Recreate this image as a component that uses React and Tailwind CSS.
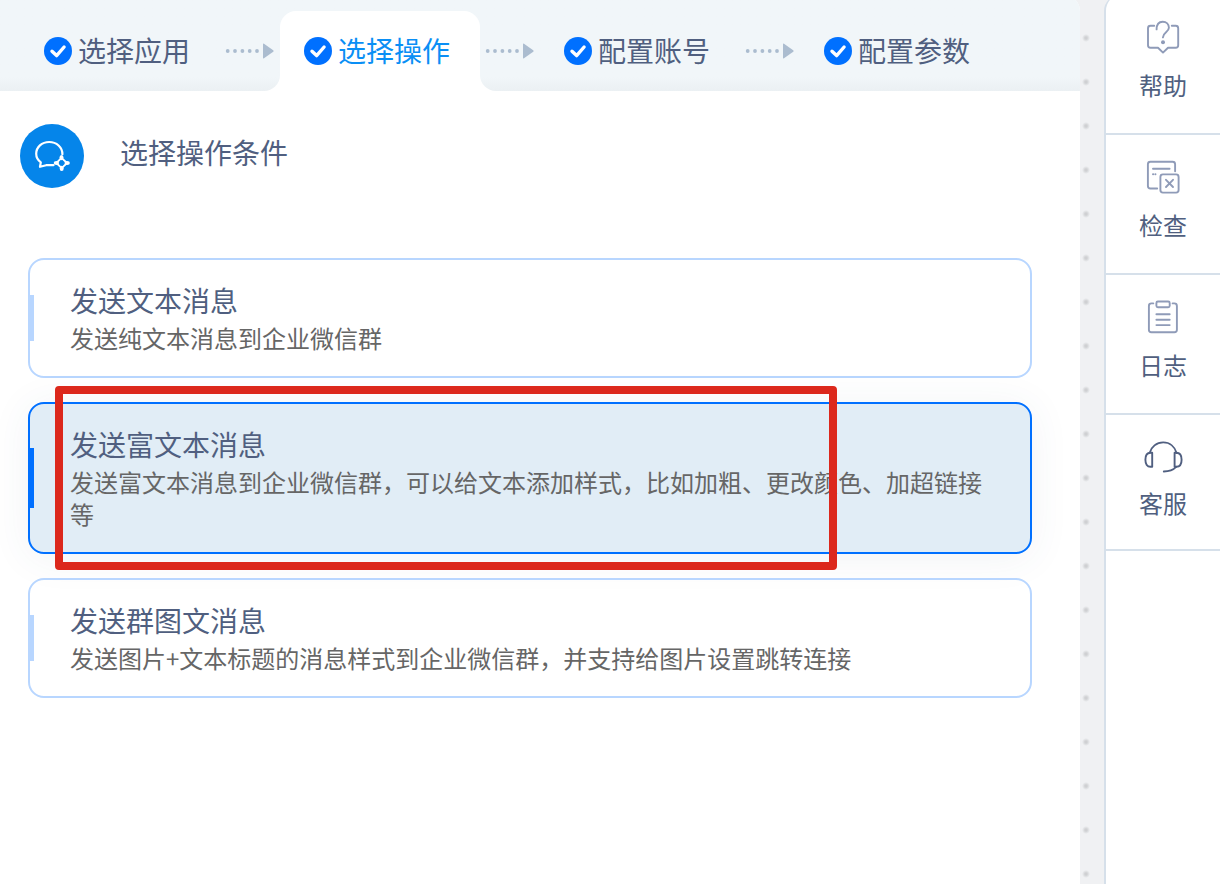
import { useState } from 'react'
import clsx from 'clsx'

const steps = ['选择应用', '选择操作', '配置账号', '配置参数']

const actions = [
  { id: 'text', title: '发送文本消息', desc: '发送纯文本消息到企业微信群' },
  {
    id: 'rich',
    title: '发送富文本消息',
    desc: '发送富文本消息到企业微信群，可以给文本添加样式，比如加粗、更改颜色、加超链接等',
    marked: true
  },
  { id: 'news', title: '发送群图文消息', desc: '发送图片+文本标题的消息样式到企业微信群，并支持给图片设置跳转连接' }
]

function CheckBadge() {
  return (
    <svg viewBox="0 0 28 28" className="w-7 h-7 shrink-0" aria-hidden="true">
      <circle cx="14" cy="14" r="14" fill="#0070ff" />
      <path d="M8 14.2l4.6 4.4 7.5-8.6" fill="none" stroke="#fff" strokeWidth="3.4" strokeLinecap="round" strokeLinejoin="round" />
    </svg>
  )
}

function StepArrow() {
  return (
    <svg viewBox="0 0 60 20" className="w-15 h-5 shrink-0" fill="#abbccf" aria-hidden="true">
      {[7.7, 15, 22.4, 29.7, 37].map(x => (
        <circle key={x} cx={x} cy="10" r="1.9" />
      ))}
      <path d="M43 3.2q0-1 1-.5l9.2 6.5q1 .8 0 1.6l-9.2 6.5q-1 .5-1-.5z" />
    </svg>
  )
}

function ChatLogo() {
  return (
    <svg viewBox="0 0 64 64" className="w-16 h-16 shrink-0" aria-hidden="true">
      <circle cx="32" cy="32" r="32" fill="#0585ea" />
      <g fill="none" stroke="#fff" strokeWidth="2.2" strokeLinecap="round" strokeLinejoin="round">
        <path d="M33.5 41.2H26.2L20 42.8L20.8 38.4C17.8 36.2 16.2 33.2 16.2 29.8C16.2 23.2 21.8 18 29.2 18S42.4 23.2 42.4 30.2" />
        <path d="M41.5 33.8L47 39L41.7 44.2L36.4 39z" strokeWidth="1.8" />
      </g>
      <g fill="#fff">
        <ellipse cx="41.5" cy="33.6" rx="2" ry="2.6" />
        <ellipse cx="47.2" cy="39" rx="2.7" ry="1.9" />
        <ellipse cx="41.7" cy="44.4" rx="2" ry="2.6" />
        <ellipse cx="36.4" cy="39" rx="2.7" ry="1.9" />
      </g>
    </svg>
  )
}

function SideIcon({ children, className }) {
  return (
    <svg
      viewBox="0 0 44 44"
      className={clsx('w-11 h-11', className)}
      fill="none"
      stroke="currentColor"
      strokeWidth="1.9"
      strokeLinecap="round"
      strokeLinejoin="round"
      aria-hidden="true"
    >
      {children}
    </svg>
  )
}

const sideItems = [
  {
    label: '帮助',
    icon: (
      <SideIcon className="text-[#8f9bb8]">
        <path d="M13.2 10.8H9.5Q7 10.8 7 13.3V30.2Q7 32.7 9.5 32.7H17L22 37.6L27 32.7H34.7Q37.2 32.7 37.2 30.2V13.3Q37.2 10.8 34.7 10.8H30.8" />
        <path d="M15.6 14.4C15.6 9.6 18 6.7 21.7 6.7S27.9 9.4 27.9 12.8C27.9 17.2 21.9 17.4 21.9 22.4" />
        <circle cx="22" cy="27.3" r="2" fill="currentColor" stroke="none" />
      </SideIcon>
    )
  },
  {
    label: '检查',
    icon: (
      <SideIcon className="text-[#8f9bb8]">
        <path d="M16.2 33.5H9.4Q6.9 33.5 6.9 31V9.2Q6.9 6.7 9.4 6.7H31.6Q34.1 6.7 34.1 9.2V16.3" />
        <path d="M12 13.7H28.6M12 19.3H12.2M14.3 19.3H14.5" />
        <rect x="19.4" y="19.4" width="18.2" height="18.2" rx="2.5" />
        <path d="M25 24.8L32 32M32 24.8L25 32" />
      </SideIcon>
    )
  },
  {
    label: '日志',
    icon: (
      <SideIcon className="text-[#8f9bb8]">
        <path d="M12.3 8.4H10.4Q7.9 8.4 7.9 10.9V34.8Q7.9 37.3 10.4 37.3H33.4Q35.9 37.3 35.9 34.8V10.9Q35.9 8.4 33.4 8.4H31.6" />
        <rect x="15.4" y="6.5" width="13.3" height="5.8" rx="1.5" />
        <path d="M15.4 19.3H28.7M15.4 24.7H28.7M15.4 30.1H28.7" />
      </SideIcon>
    )
  },
  {
    label: '客服',
    compact: true,
    icon: (
      <SideIcon className="text-[#505f80]">
        <path d="M8.6 18C10.2 11.8 15.6 7.4 22.2 7.4S33.8 11.8 35.6 18" />
        <path d="M11.2 17.8V31.8H9.4C6.2 31.8 4.4 29 4.4 24.8S6.2 17.8 9.4 17.8z" />
        <path d="M33.6 17.8V31.8H35.4C38.8 31.8 40.6 29 40.6 24.8S38.8 17.8 35.4 17.8z" />
        <path d="M35.2 31.8C32 35 28 36.4 22.8 36.5" />
      </SideIcon>
    )
  }
]

export default function App() {
  const [step, setStep] = useState(1)
  const [selected, setSelected] = useState('rich')

  const renderStep = i => (
    <button
      key={steps[i]}
      onClick={() => setStep(i)}
      className={clsx(
        'flex items-center gap-1.5 w-50 h-20 pl-6 shrink-0 whitespace-nowrap text-[28px]',
        i === step ? 'rounded-t-2xl bg-white text-[#0a8ff5]' : 'text-[#505f80]'
      )}
    >
      <CheckBadge />
      <span className="pb-0.5">{steps[i]}</span>
    </button>
  )

  const barClass = 'flex items-center pt-4 bg-linear-to-b from-[#f1f6f9] from-85% to-[#ebf0f3]'

  return (
    <div lang="zh-CN" className="min-h-screen overflow-hidden bg-[#f0f1f3] font-['Noto_Sans_CJK_SC',sans-serif]">
      <div className="flex items-stretch min-h-[calc(100vh+5px)] -mt-[5px]">
        <main className="flex-1 min-w-0 bg-white rounded-tr-2xl overflow-hidden">
          {/* Steps */}
          <nav className="flex">
            <div className={clsx(barClass, 'pl-5 rounded-br-2xl')}>
              {steps.slice(0, step).map((name, i) => (
                <div key={name} className="flex items-center">
                  {renderStep(i)}
                  <StepArrow />
                </div>
              ))}
            </div>
            <div className="pt-4 bg-linear-to-b from-[#f1f6f9] from-50% to-white to-50%">{renderStep(step)}</div>
            <div className={clsx(barClass, 'flex-1 rounded-bl-2xl')}>
              {steps.slice(step + 1).map((name, i) => (
                <div key={name} className="flex items-center">
                  <StepArrow />
                  {renderStep(step + 1 + i)}
                </div>
              ))}
            </div>
          </nav>

          {/* Title */}
          <div className="flex items-start gap-9 px-5 pt-[33px]">
            <ChatLogo />
            <h1 className="text-[28px] leading-14 text-[#505f80]">选择操作条件</h1>
          </div>

          {/* Action list */}
          <ul className="flex flex-col gap-6 pt-[70px] pl-7 pr-12 pb-12">
            {actions.map(action => {
              const active = action.id === selected
              return (
                <li key={action.id} className="relative">
                  <button
                    onClick={() => setSelected(action.id)}
                    aria-pressed={active}
                    className={clsx(
                      'relative block w-full rounded-2xl border-2 px-10 pt-[18px] pb-[22px] text-left',
                      active
                        ? 'border-[#0070ff] bg-[#e1edf6] shadow-[0_4px_40px_rgba(60,80,120,0.07)]'
                        : 'border-[#b8d6ff]'
                    )}
                  >
                    <span
                      className={clsx(
                        'absolute -left-0.5 top-[30%] h-[40%] w-1.5',
                        active ? 'bg-[#0070ff]' : 'bg-[#b8d6ff]'
                      )}
                    />
                    <span className="block text-[28px] leading-11 text-[#505f80]">{action.title}</span>
                    <span className="block text-2xl leading-8 text-[#666666]">{action.desc}</span>
                  </button>
                  {action.marked && (
                    <span className="absolute -inset-y-4 left-[27px] right-[195px] z-10 rounded border-8 border-[#dc281c] pointer-events-none" />
                  )}
                </li>
              )
            })}
          </ul>
        </main>

        {/* Dotted canvas */}
        <div className="w-6 shrink-0 bg-[radial-gradient(circle_at_6px_21px,#cfd0d2_1px,transparent_4px)] bg-size-[44px_44px] bg-repeat-y bg-position-[0_22px]" />

        {/* Side tools */}
        <aside className="w-[116px] shrink-0 bg-white border-l-2 border-[#d6e0ea] rounded-tl-2xl">
          {sideItems.map(item => (
            <button
              key={item.label}
              className={clsx(
                'flex w-full flex-col items-center pt-5 border-b-2 border-[#d6e0ea] text-2xl leading-8 text-[#505f80]',
                item.compact ? 'gap-2 pb-[30px]' : 'gap-2.5 pb-8'
              )}
            >
              {item.icon}
              {item.label}
            </button>
          ))}
        </aside>
      </div>
    </div>
  )
}
